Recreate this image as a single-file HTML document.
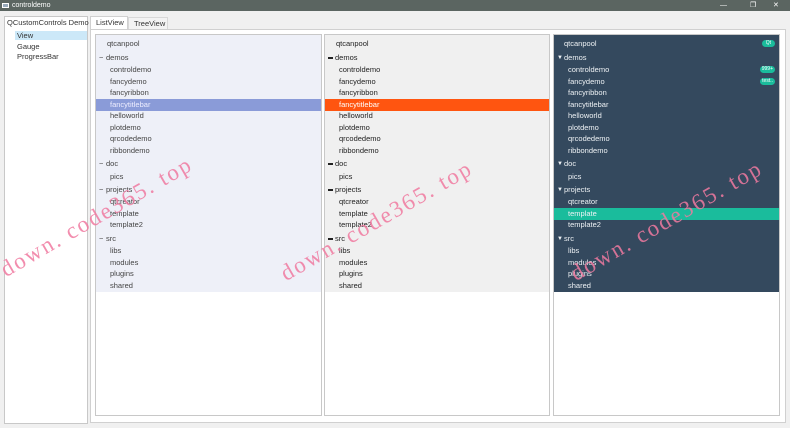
<!DOCTYPE html><html><head><meta charset="utf-8"><style>
*{margin:0;padding:0;box-sizing:border-box}
body{width:790px;height:428px;background:#f0f0f0;font-family:"Liberation Sans",sans-serif;font-size:7.5px;color:#333;position:relative;overflow:hidden}
.a{position:absolute}
.tb{left:0;top:0;width:790px;height:11px;background:#5b6561;color:#fff;font-size:7px;line-height:11px}
.p{position:absolute;top:34px;height:382px;border:1px solid #c8c8c8;background:#fff}
.l{position:absolute;left:0;top:0;width:100%;height:257px}
.r{position:absolute;left:0;width:100%;height:12px;line-height:12px;white-space:nowrap}
.r span{position:absolute}
.r i{position:absolute;left:3px;top:5px;width:5px;height:2px;background:#222}
.wm{position:absolute;color:#f07aa0;font-family:"Liberation Serif",serif;font-size:23px;letter-spacing:2px;transform-origin:0 0;transform:rotate(-30deg);white-space:nowrap;opacity:.85}
.bd{position:absolute;right:4px;top:2px;height:7px;border-radius:4px;background:#1abc9c;color:#fff;font-size:5px;line-height:7px;padding:0 4px}
</style></head><body>
<div class="a tb"><span style="position:absolute;left:2px;top:3px;width:7px;height:5px;border:1px solid #fff;background:#9ab"></span><span style="position:absolute;left:12px">controldemo</span><span style="position:absolute;left:720px">—</span><span style="position:absolute;left:750px">❐</span><span style="position:absolute;left:773px">✕</span></div>
<div class="a" style="left:4px;top:16px;width:84px;height:408px;background:#fff;border:1px solid #c8c8c8"></div>
<div class="a" style="left:7px;top:18px;font-size:7.5px">QCustomControls Demo</div>
<div class="a" style="left:15px;top:31px;width:72px;height:9px;background:#cce8f8"></div>
<div class="a" style="left:17px;top:31px">View</div>
<div class="a" style="left:17px;top:42px">Gauge</div>
<div class="a" style="left:17px;top:52px">ProgressBar</div>
<div class="a" style="left:90px;top:16px;width:38px;height:14px;background:#fff;border:1px solid #d0d0d0;border-bottom:none"></div>
<div class="a" style="left:96px;top:18px">ListView</div>
<div class="a" style="left:128px;top:17px;width:40px;height:12px;background:#f3f3f3;border:1px solid #d8d8d8;border-bottom:none"></div>
<div class="a" style="left:134px;top:19px">TreeView</div>
<div class="a" style="left:90px;top:29px;width:696px;height:394px;background:#fff;border:1px solid #d0d0d0"></div>

<!-- panel 1 -->
<div class="p" style="left:95px;width:227px"><div class="l" style="background:#eef0f8;color:#444">
<div class="r" style="top:3px"><span style="left:11px">qtcanpool</span></div>
<div class="r" style="top:17px"><span style="left:3px">−</span><span style="left:10px">demos</span></div>
<div class="r" style="top:29px"><span style="left:14px">controldemo</span></div>
<div class="r" style="top:41px"><span style="left:14px">fancydemo</span></div>
<div class="r" style="top:52px"><span style="left:14px">fancyribbon</span></div>
<div class="r" style="top:64px;background:#8a9bd8;color:#eef"><span style="left:14px">fancytitlebar</span></div>
<div class="r" style="top:75px"><span style="left:14px">helloworld</span></div>
<div class="r" style="top:87px"><span style="left:14px">plotdemo</span></div>
<div class="r" style="top:98px"><span style="left:14px">qrcodedemo</span></div>
<div class="r" style="top:110px"><span style="left:14px">ribbondemo</span></div>
<div class="r" style="top:123px"><span style="left:3px">−</span><span style="left:10px">doc</span></div>
<div class="r" style="top:136px"><span style="left:14px">pics</span></div>
<div class="r" style="top:149px"><span style="left:3px">−</span><span style="left:10px">projects</span></div>
<div class="r" style="top:161px"><span style="left:14px">qtcreator</span></div>
<div class="r" style="top:173px"><span style="left:14px">template</span></div>
<div class="r" style="top:184px"><span style="left:14px">template2</span></div>
<div class="r" style="top:198px"><span style="left:3px">−</span><span style="left:10px">src</span></div>
<div class="r" style="top:210px"><span style="left:14px">libs</span></div>
<div class="r" style="top:222px"><span style="left:14px">modules</span></div>
<div class="r" style="top:233px"><span style="left:14px">plugins</span></div>
<div class="r" style="top:245px"><span style="left:14px">shared</span></div>
</div></div>

<!-- panel 2 -->
<div class="p" style="left:324px;width:226px"><div class="l" style="background:#f0f0f0;color:#222">
<div class="r" style="top:3px"><span style="left:11px">qtcanpool</span></div>
<div class="r" style="top:17px"><i></i><span style="left:10px">demos</span></div>
<div class="r" style="top:29px"><span style="left:14px">controldemo</span></div>
<div class="r" style="top:41px"><span style="left:14px">fancydemo</span></div>
<div class="r" style="top:52px"><span style="left:14px">fancyribbon</span></div>
<div class="r" style="top:64px;background:#ff5510;color:#fff"><span style="left:14px">fancytitlebar</span></div>
<div class="r" style="top:75px"><span style="left:14px">helloworld</span></div>
<div class="r" style="top:87px"><span style="left:14px">plotdemo</span></div>
<div class="r" style="top:98px"><span style="left:14px">qrcodedemo</span></div>
<div class="r" style="top:110px"><span style="left:14px">ribbondemo</span></div>
<div class="r" style="top:123px"><i></i><span style="left:10px">doc</span></div>
<div class="r" style="top:136px"><span style="left:14px">pics</span></div>
<div class="r" style="top:149px"><i></i><span style="left:10px">projects</span></div>
<div class="r" style="top:161px"><span style="left:14px">qtcreator</span></div>
<div class="r" style="top:173px"><span style="left:14px">template</span></div>
<div class="r" style="top:184px"><span style="left:14px">template2</span></div>
<div class="r" style="top:198px"><i></i><span style="left:10px">src</span></div>
<div class="r" style="top:210px"><span style="left:14px">libs</span></div>
<div class="r" style="top:222px"><span style="left:14px">modules</span></div>
<div class="r" style="top:233px"><span style="left:14px">plugins</span></div>
<div class="r" style="top:245px"><span style="left:14px">shared</span></div>
</div></div>

<!-- panel 3 -->
<div class="p" style="left:553px;width:227px"><div class="l" style="background:#34495e;color:#eef2f5">
<div class="r" style="top:3px"><span style="left:10px">qtcanpool</span><span class="bd">Qt</span></div>
<div class="r" style="top:17px"><span style="left:3px;font-size:6px">▼</span><span style="left:10px">demos</span></div>
<div class="r" style="top:29px"><span style="left:14px">controldemo</span><span class="bd" style="padding:0 2px">999+</span></div>
<div class="r" style="top:41px"><span style="left:14px">fancydemo</span><span class="bd" style="padding:0 2px">test..</span></div>
<div class="r" style="top:52px"><span style="left:14px">fancyribbon</span></div>
<div class="r" style="top:64px"><span style="left:14px">fancytitlebar</span></div>
<div class="r" style="top:75px"><span style="left:14px">helloworld</span></div>
<div class="r" style="top:87px"><span style="left:14px">plotdemo</span></div>
<div class="r" style="top:98px"><span style="left:14px">qrcodedemo</span></div>
<div class="r" style="top:110px"><span style="left:14px">ribbondemo</span></div>
<div class="r" style="top:123px"><span style="left:3px;font-size:6px">▼</span><span style="left:10px">doc</span></div>
<div class="r" style="top:136px"><span style="left:14px">pics</span></div>
<div class="r" style="top:149px"><span style="left:3px;font-size:6px">▼</span><span style="left:10px">projects</span></div>
<div class="r" style="top:161px"><span style="left:14px">qtcreator</span></div>
<div class="r" style="top:173px;background:#1abc9c"><span style="left:14px">template</span></div>
<div class="r" style="top:184px"><span style="left:14px">template2</span></div>
<div class="r" style="top:198px"><span style="left:3px;font-size:6px">▼</span><span style="left:10px">src</span></div>
<div class="r" style="top:210px"><span style="left:14px">libs</span></div>
<div class="r" style="top:222px"><span style="left:14px">modules</span></div>
<div class="r" style="top:233px"><span style="left:14px">plugins</span></div>
<div class="r" style="top:245px"><span style="left:14px">shared</span></div>
</div></div>

<div class="wm" style="left:-4px;top:260px">down. code365. top</div>
<div class="wm" style="left:276px;top:264px">down. code365. top</div>
<div class="wm" style="left:566px;top:264px">down. code365. top</div>
</body></html>
